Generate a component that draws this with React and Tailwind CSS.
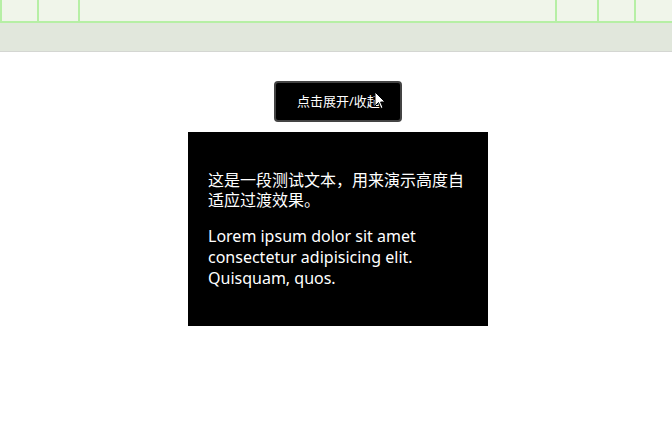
export default function App() {
  const font = { fontFamily: '"Noto Sans", "Noto Sans CJK SC", sans-serif' };
  return (
    <div className="min-h-screen bg-white" style={font}>
      {/* top strip */}
      <div className="h-[21px] bg-[#f0f5ea] flex justify-between">
        <div className="flex">
          <div className="w-[2px] bg-[#b6efa5]" />
          <div className="w-[35px]" />
          <div className="w-[2px] bg-[#b6efa5]" />
          <div className="w-[39px]" />
          <div className="w-[2px] bg-[#b6efa5]" />
        </div>
        <div className="flex">
          <div className="w-[2px] bg-[#b6efa5]" />
          <div className="w-[40px]" />
          <div className="w-[2px] bg-[#b6efa5]" />
          <div className="w-[35px]" />
          <div className="w-[2px] bg-[#b6efa5]" />
          <div className="w-[36px]" />
        </div>
      </div>
      <div className="h-[2px] bg-[#b6efa5]" />
      <div className="h-[29px] bg-[#e1e7dc] border-b border-[#d4d6d2]" />

      <div className="flex flex-col items-center pt-[29px] pl-[4px]">
        <div className="relative">
          <button className="w-[128px] h-[41px] bg-black text-white text-[13px] rounded-[4px] border-2 border-[#444] pl-[21px] text-left">
            点击展开/收起
          </button>
          <svg
            className="absolute left-[100px] top-[10px]"
            width="12"
            height="19"
            viewBox="0 0 12 19"
          >
            <path
              d="M1 1 L1 15 L4.5 11.5 L7 17.5 L9 16.6 L6.6 11 L11 11 Z"
              fill="white"
              stroke="black"
              strokeWidth="1"
            />
          </svg>
        </div>

        <div className="mt-[10px] w-[300px] bg-black text-white text-[16px] leading-[20px] px-5 pt-[38px] pb-[37px]">
          <p>这是一段测试文本，用来演示高度自适应过渡效果。</p>
          <p className="mt-4 leading-[21px]">
            Lorem ipsum dolor sit amet consectetur adipisicing elit.
            Quisquam, quos.
          </p>
        </div>
      </div>
    </div>
  );
}
